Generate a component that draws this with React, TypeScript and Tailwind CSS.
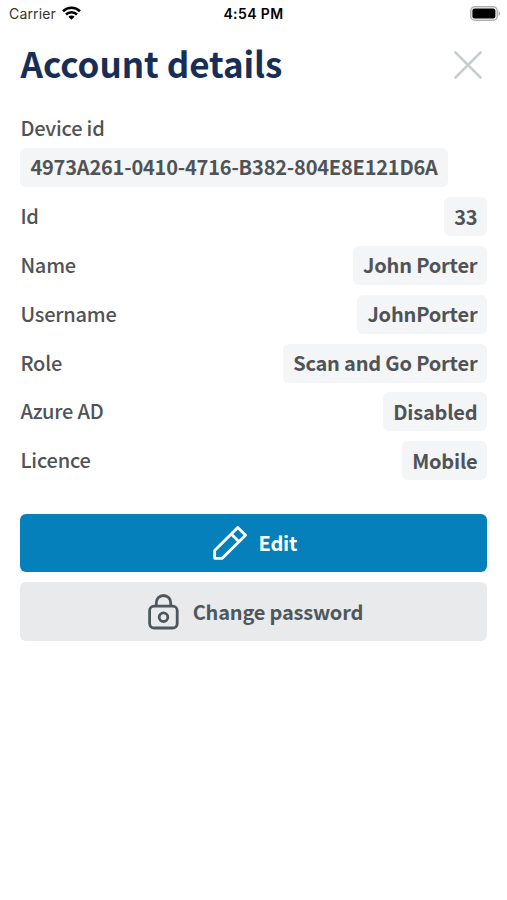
import React from 'react';

interface IDetailRow {
  label: string;
  value: string;
}

const details: IDetailRow[] = [
  { label: 'Id', value: '33' },
  { label: 'Name', value: 'John Porter' },
  { label: 'Username', value: 'JohnPorter' },
  { label: 'Role', value: 'Scan and Go Porter' },
  { label: 'Azure AD', value: 'Disabled' },
  { label: 'Licence', value: 'Mobile' },
];

function StatusBar() {
  return (
    <div className="grid h-7 grid-cols-3 items-center px-[9px] font-['Inter',sans-serif] text-[14px] leading-none text-black">
      <div className="flex items-center gap-[6px]">
        <span className="tracking-[0.15px] text-[#333333]">Carrier</span>
        <svg className="-mt-[2px]" width="19" height="14" viewBox="0 0 19 14" fill="none" stroke="black" strokeWidth="2.6">
          <path d="M1 5.2a12.2 12.2 0 0 1 17 0" />
          <path d="M4 8.5a7.9 7.9 0 0 1 11 0" />
          <path d="M9.5 13.8 6.4 10.7a4.4 4.4 0 0 1 6.2 0Z" fill="black" stroke="none" />
        </svg>
      </div>
      <span className="text-center font-semibold tracking-[0.4px]">4:54 PM</span>
      <svg className="-mr-[3px] -mt-[2px] justify-self-end" width="31" height="15" viewBox="0 0 31 15">
        <rect x="0.8" y="0.8" width="26.4" height="13.4" rx="4" fill="white" stroke="#b0b0b0" strokeWidth="1.5" />
        <rect x="2.4" y="2.6" width="23" height="9.8" rx="2" fill="black" />
        <path d="M28.6 5.2c2 .7 2 3.9 0 4.6Z" fill="#a6a6a6" />
      </svg>
    </div>
  );
}

function Value({ children }: { children: React.ReactNode }) {
  return (
    <span className="flex h-[39px] items-center rounded-md bg-[#f3f5f6] px-[10px] pb-[0.5px] font-bold">
      {children}
    </span>
  );
}

export default function App() {
  return (
    <div className="h-[900px] w-[507px] bg-white font-['Noto_Sans_CJK_SC',sans-serif] text-[20px] leading-none tracking-[-0.2px] text-[#505356]">
      <StatusBar />

      <div className="flex h-[73px] items-center justify-between pl-[20.5px] pr-[25px]">
        <h1 className="pb-[4px] text-[35px] font-bold tracking-[-0.05px] text-[#172f57]">Account details</h1>
        <button type="button" aria-label="Close">
          <svg width="28" height="28" viewBox="0 0 28 28" stroke="#c8cdcf" strokeWidth="2.6" strokeLinecap="round">
            <path d="m1.5 1.5 25 25m0-25-25 25" />
          </svg>
        </button>
      </div>

      <div className="pl-[20.4px] pr-[19.6px] pt-[15px]">
        <div className="flex flex-col items-start gap-[7px]">
          <span className="flex h-[25px] items-center pb-[2px] font-medium">Device id</span>
          <Value>4973A261-0410-4716-B382-804E8E121D6A</Value>
        </div>

        <div className="mt-[10.3px] flex flex-col gap-[9.8px]">
          {details.map((row) => (
            <div key={row.label} className="flex items-center justify-between">
              <span className="pb-px font-medium">{row.label}</span>
              <Value>{row.value}</Value>
            </div>
          ))}
        </div>

        <div className="mt-[33.7px] flex flex-col gap-[10px] font-bold">
          <button
            type="button"
            className="flex h-[58.5px] items-center justify-center gap-[12px] rounded-md bg-[#0580ba] pl-[2px] text-white"
          >
            <svg width="34" height="34" viewBox="0 0 35 35" fill="none" stroke="currentColor" strokeWidth="2.9" strokeLinejoin="round">
              <path d="M1.7 33.3v-8L25.5 1.5l8 8L9.5 33.3Z" />
              <path d="m18.7 8.3 8 8" />
            </svg>
            Edit
          </button>
          <button
            type="button"
            className="flex h-[58.5px] items-center justify-center gap-[14px] rounded-md bg-[#e8eaeb] pl-[3px] text-[#4e585c]"
          >
            <svg width="31" height="36" viewBox="0 0 31 36" fill="none" stroke="currentColor" strokeWidth="2.8">
              <rect x="1.6" y="12.2" width="27.6" height="21.8" rx="4.5" />
              <path d="M8.3 12V8.7a7.2 7.2 0 0 1 14.4 0V12" />
              <circle cx="15.5" cy="23.2" r="4.3" />
            </svg>
            Change password
          </button>
        </div>
      </div>
    </div>
  );
}
